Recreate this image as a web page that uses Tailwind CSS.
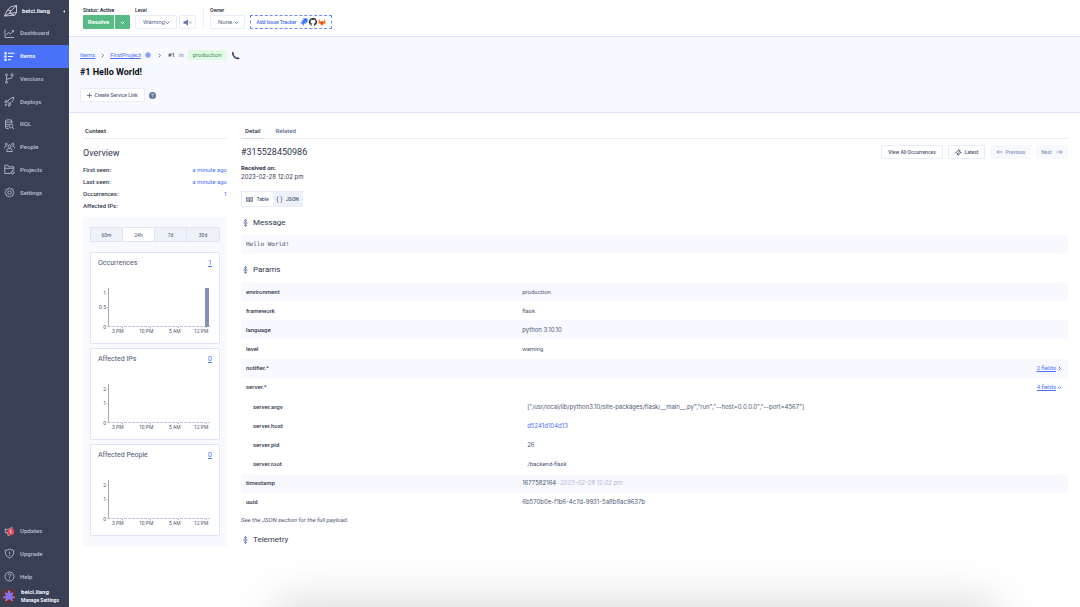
<!DOCTYPE html>
<html lang="en">
<head>
<meta charset="utf-8">
<meta name="viewport" content="width=device-width, initial-scale=1">
<title>#1 Hello World! - FirstProject</title>
<script src="https://cdn.jsdelivr.net/npm/@tailwindcss/browser@4"></script>
</head>
<body class="flex min-h-screen bg-white font-[Roboto,'Noto_Sans',sans-serif] text-[6px] leading-[8px] text-[#4b5675]">
<svg class="hidden" aria-hidden="true">
  <symbol id="chev" viewBox="0 0 10 10"><path d="M1.500 3.500 5 7 8.500 3.500" fill="none" stroke="currentColor" stroke-width="1.900"/></symbol>
  <symbol id="updown" viewBox="0 0 10 16"><path d="M5 1v5.500M5 9.500V15M2 4 5 1l3 3M2 12l3 3 3-3M1 6.500h8M1 9.500h8" fill="none" stroke="currentColor" stroke-width="1.500"/></symbol>
  <symbol id="arrow" viewBox="0 0 16 12"><path d="M1 6h13M9.500 1.500 14 6l-4.500 4.500" fill="none" stroke="currentColor" stroke-width="1.800"/></symbol>
</svg>

<aside class="flex w-[69px] shrink-0 flex-col bg-[#393f55] font-medium text-[#b9c0d4]">
  <a href="#" class="flex h-[22px] items-center pl-1 pr-1 text-[#eef0f7]">
    <svg class="h-3 w-[14px]" viewBox="0 0 28 24" fill="none" stroke="currentColor" stroke-width="1.500" stroke-linejoin="round"><path d="M1 22 7 10 14 3.500 25 1v14l-4 5.500L1 22zM7 10l7 1.500L25 1M14 11.500 11 16.500 1 22M11 16.500 25 15M11 16.500l10 4"/></svg>
    <span class="ml-1 grow font-bold">beici.liang</span>
    <svg class="h-[3px] w-[2px]" viewBox="0 0 2 3"><path d="M2 0v3L0 1.500z" fill="#d8dce8"/></svg>
  </a>
  <nav class="grid h-[182px] auto-rows-fr">
    <a href="#" class="flex items-center gap-[5px] pl-1"><svg class="h-[11px] w-[11px]" viewBox="0 0 22 22" fill="none" stroke="currentColor" stroke-width="1.700"><path d="M2 3v16h18M4.500 14l4.500-5 4 3 6-7M15.500 5H19v3.500"/></svg>Dashboard</a>
    <a href="#" class="flex items-center gap-[5px] bg-[#4a72f8] pl-1 text-white"><svg class="h-[11px] w-[11px]" viewBox="0 0 22 22" fill="none" stroke="currentColor" stroke-width="2.200"><path d="M8 4.500h13M8 11h10M8 17.500h6"/><circle cx="3" cy="4.500" r="1.400"/><circle cx="3" cy="11" r="1.400"/><circle cx="3" cy="17.500" r="1.400"/></svg>Items</a>
    <a href="#" class="flex items-center gap-[5px] pl-1"><svg class="h-[11px] w-[11px]" viewBox="0 0 22 22" fill="none" stroke="currentColor" stroke-width="1.700"><circle cx="5" cy="3.500" r="2"/><circle cx="5" cy="18.500" r="2"/><circle cx="16" cy="3.500" r="2"/><path d="M5 5.500v11M16 5.500V8q0 2-2 2.500l-7 1.500q-2 .5-2 2.500"/></svg>Versions</a>
    <a href="#" class="flex items-center gap-[5px] pl-1"><svg class="h-[11px] w-[11px]" viewBox="0 0 22 22" fill="none" stroke="currentColor" stroke-width="1.700" stroke-linejoin="round"><path d="M7 11.500Q11 3 19.500 2.500 19.500 11 10.500 15zM7.500 9.500 3.500 9 1.500 13l5-1M12.500 14.500l.5 4-4 2 1-5.500M5 15l-3 4.500L6.500 17"/></svg>Deploys</a>
    <a href="#" class="flex items-center gap-[5px] pl-1"><svg class="h-[11px] w-[11px]" viewBox="0 0 22 22" fill="none" stroke="currentColor" stroke-width="1.700"><ellipse cx="9.500" cy="4" rx="6.500" ry="2.500"/><path d="M3 4v13q0 2.500 6.500 2.500M16 4v5M3 8.500q1 2.500 6.500 2.500M3 13q.5 2 5 2.500"/><circle cx="14" cy="14" r="4"/><path d="m17 17 3.500 3.500"/></svg>RQL</a>
    <a href="#" class="flex items-center gap-[5px] pl-1"><svg class="h-[11px] w-[11px]" viewBox="0 0 22 22" fill="none" stroke="currentColor" stroke-width="1.700"><circle cx="11" cy="8.500" r="2.800"/><circle cx="4.500" cy="4.500" r="2"/><circle cx="17.500" cy="4.500" r="2"/><path d="M5.500 19v-2q0-3.500 3.500-3.500h4q3.500 0 3.500 3.500v2zM1 13V11q0-2.500 3-2.500h1M21 13V11q0-2.500-3-2.500h-1"/></svg>People</a>
    <a href="#" class="flex items-center gap-[5px] pl-1"><svg class="h-[11px] w-[11px]" viewBox="0 0 22 22" fill="none" stroke="currentColor" stroke-width="1.700"><path d="M13 19H1.500V2.500H8l2 3h9.500v7M1.500 8.500h18"/><circle cx="17" cy="17" r="2.500"/><path d="M17 12.800v1.700M17 19.500v1.700M12.800 17h1.700M19.500 17h1.700"/></svg>Projects</a>
    <a href="#" class="flex items-center gap-[5px] pl-1"><svg class="h-[11px] w-[11px]" viewBox="0 0 22 22" fill="none" stroke="currentColor" stroke-width="1.700" stroke-linejoin="round"><path d="m11 2 3 2 3.500.5.5 3.500 2 3-2 3-.5 3.500L14 18l-3 2-3-2-3.500-.5L4 14l-2-3 2-3 .5-3.500L8 4z"/><circle cx="11" cy="11" r="3.500"/></svg>Settings</a>
  </nav>
  <nav class="mt-auto grid h-[68px] auto-rows-fr">
    <a href="#" class="flex items-center gap-[5px] pl-1"><svg class="h-[11px] w-[11px]" viewBox="0 0 22 22"><path d="M2 6l5 1 9-4v11l-8-1-5 1zM6 13l2 6h3" fill="none" stroke="currentColor" stroke-width="1.700"/><circle cx="13.500" cy="11.500" r="7" fill="#dc4a57"/><path d="m11.500 9.500 2.200-1.700V15.500" fill="none" stroke="#fff" stroke-width="1.500"/></svg>Updates</a>
    <a href="#" class="flex items-center gap-[5px] pl-1"><svg class="h-[11px] w-[11px]" viewBox="0 0 22 22" fill="none" stroke="currentColor" stroke-width="1.700"><path d="M11 2q3.500 2.500 8.500 2.500Q20.500 16 11 20 1.500 16 2.500 4.500 7.500 4.500 11 2zM11 7v5M11 13.500v2"/></svg>Upgrade</a>
    <a href="#" class="flex items-center gap-[5px] pl-1"><svg class="h-[11px] w-[11px]" viewBox="0 0 22 22" fill="none" stroke="currentColor" stroke-width="1.700"><circle cx="11" cy="11" r="9"/><path d="M8 9q0-3 3-3t3 2.500q0 1.500-3 3v2M11 15v2"/></svg>Help</a>
  </nav>
  <a href="#" class="flex h-[19px] items-center gap-[5px] pl-[2px] pb-[3px] leading-[8px] text-[#f1f3f9]">
    <svg class="h-[14px] w-[14px]" viewBox="0 0 28 28"><circle cx="14" cy="14" r="14" fill="#6d2f22"/><path d="M12 3h4l1 6 5-3v5l-3 3 7 1v3l-6 1 2 5h-4l-2-3h-4l-2 3H6l2-5-6-1v-3l7-1-3-3V6l5 3z" fill="#8374f5"/></svg>
    <span class="text-[6px] font-bold">beici.liang<br><span class="text-[5px] whitespace-nowrap">Manage Settings</span></span>
  </a>
</aside>

<div class="flex min-w-0 grow flex-col">
  <header class="flex h-[37px] items-start border-b border-[#dde3fa] pl-[14px] pt-[7px] text-[5px] leading-[6px] text-[#23283a]">
    <div>
      <div class="font-medium">Status: <b>Active</b></div>
      <div class="mt-[2px] flex h-[14px] gap-px text-white">
        <button class="w-[31px] rounded-l-[1px] bg-[#56bb85] text-[6px] font-bold">Resolve</button>
        <button aria-label="More resolve options" class="flex w-[15px] items-center justify-center rounded-r-[1px] bg-[#56bb85]"><svg class="size-[5px]"><use href="#chev"/></svg></button>
      </div>
    </div>
    <div class="ml-[5px]">
      <label for="level" class="block font-medium">Level</label>
      <div class="mt-[2px] flex gap-[2px]">
        <div class="relative text-[#5b6788]">
          <select id="level" class="h-[14px] w-[42px] appearance-none rounded-[1px] border border-[#e9edf9] bg-white pl-[7px] text-[6px] leading-[8px]"><option>Warning</option></select>
          <svg class="pointer-events-none absolute right-[7px] top-[5px] size-[5px]"><use href="#chev"/></svg>
        </div>
        <button aria-label="Mute" class="flex h-[14px] w-[17px] items-center justify-center rounded-[1px] border border-[#e9edf9] text-[#6677a3]"><svg class="size-[9px]" viewBox="0 0 18 18"><path d="M1 6.500h4L10 2.500v13L5 11.500H1z" fill="currentColor"/><path d="m12.500 7 4 4m0-4-4 4" stroke="currentColor" stroke-width="1.300"/></svg></button>
      </div>
    </div>
    <div class="ml-[7px] h-[21px] border-l border-[#e9edf9]"></div>
    <div class="ml-[6px]">
      <label for="owner" class="block font-medium">Owner</label>
      <div class="relative mt-[2px] text-[#5b6788]">
        <select id="owner" class="h-[14px] w-[35px] appearance-none rounded-[1px] border border-[#e9edf9] bg-white pl-[7px] text-[6px] leading-[8px]"><option>None</option></select>
        <svg class="pointer-events-none absolute right-[6px] top-[5px] size-[5px]"><use href="#chev"/></svg>
      </div>
    </div>
    <button class="ml-[5px] mt-2 flex h-[14px] w-[82px] items-center justify-center gap-px rounded-[1px] border border-dashed border-[#6b8bfa] text-[#3f66ee]">
      <span class="mr-[2px] font-medium">Add Issue Tracker</span>
      <svg class="size-2" viewBox="0 0 16 16" fill="#2f6cf5"><path d="M6 1h9v9q-3.500 0-3.500-3.500H10V4.500Q6 4.500 6 1z"/><path d="M3.500 4.500H11V12q-3 0-3-3H6.500V7.500q-3 0-3-3z"/><path d="M1 8h7v7q-3 0-3-3H4v-1Q1 11 1 8z" opacity=".85"/></svg>
      <svg class="size-2" viewBox="0 0 16 16" fill="#1f2430"><path d="M8 0a8 8 0 0 0-2.500 15.600c.4 0 .5-.2.5-.4v-1.500c-2.200.5-2.700-1-2.700-1-.4-.9-.9-1.200-.9-1.200-.7-.5.100-.5.100-.5.800.1 1.200.8 1.200.8.700 1.300 1.900.9 2.400.7 0-.5.300-.9.500-1.100-1.800-.2-3.600-.9-3.600-4 0-.9.300-1.600.800-2.100 0-.2-.4-1 .1-2.100 0 0 .7-.2 2.200.8a7.500 7.500 0 0 1 4 0c1.500-1 2.200-.8 2.200-.8.400 1.100.2 1.900.1 2.100.5.600.8 1.300.8 2.100 0 3.100-1.900 3.700-3.700 4 .3.200.6.700.6 1.500v2.200c0 .2.100.5.600.4A8 8 0 0 0 8 0z"/></svg>
      <svg class="size-2" viewBox="0 0 16 16"><path d="m8 15 7.500-5.500L13.500 2l-2.500 5H5L2.500 2 .5 9.500z" fill="#fc7a2a"/><path d="m8 15 3-8H5z" fill="#e0482b"/></svg>
    </button>
  </header>

  <section class="h-[76px] border-b border-[#dde3fa] bg-[#f7f9fe] pl-[11px] pt-[13px]">
    <div class="flex h-[10px] items-center text-[#4a72f8]">
      <a href="#" class="underline">Items</a>
      <svg class="mx-[5px] size-[5px] -rotate-90 text-[#6d7a9c]"><use href="#chev"/></svg>
      <a href="#" class="underline">FirstProject</a>
      <svg class="ml-1 size-[6px]" viewBox="0 0 12 12"><circle cx="6" cy="6" r="5" fill="#a9bffa" stroke="#5e84f8"/><path d="M3 6h6M6 3v6" stroke="#3f68ef"/></svg>
      <svg class="mx-[6px] size-[5px] -rotate-90 text-[#6d7a9c]"><use href="#chev"/></svg>
      <span class="font-medium text-[#3a4157]">#1</span><span class="mx-1 text-[#7684a6]">in</span>
      <span class="rounded-[2px] bg-[#dffbe3] px-[5px] py-px text-[#4c8a66]">production</span>
      <svg class="ml-1 size-[9px]" viewBox="0 0 18 18"><path d="M3.500 1Q.5 4 3 9t8 7q4 1.500 6.500-1L14 12.500l-3 .5Q7 11 5.500 7.500l.500-3z" fill="#3c4052"/><path d="m3.500 1 2.500 3.500M14 12.500l3.500 2.500" stroke="#9aa0b0"/></svg>
    </div>
    <h1 class="mt-[6px] text-[9px] leading-3 font-bold text-[#0c0e16]">#1 Hello World!</h1>
    <div class="mt-[10px] flex items-center gap-1">
      <button class="flex h-[14px] w-[65px] items-center justify-center gap-[2px] rounded-[1px] border border-[#e9edf9] bg-white whitespace-nowrap text-[#55617f]"><svg class="size-[5px]" viewBox="0 0 10 10"><path d="M0 5h10M5 0v10" stroke="currentColor" stroke-width="1.600"/></svg><span class="text-[5px] font-medium">Create Service Link</span></button>
      <svg class="size-[7px]" viewBox="0 0 14 14"><circle cx="7" cy="7" r="7" fill="#63749f"/><path d="M5 5.500Q5 3.500 7 3.500t2 2q0 1-2 2v1M7 9.500v1.500" fill="none" stroke="#fff" stroke-width="1.300"/></svg>
    </div>
  </section>

  <div class="flex grow gap-[14px] pl-[14px] pr-3 pt-[12px]">
    <section class="w-[144px] shrink-0">
      <div class="h-[14px] border-b border-[#e9edf9] pl-[2px] pt-[2px] font-medium text-[#171b29]">Context</div>
      <h2 class="mt-[9px] text-[9px] leading-[10px] text-[#2f364c]">Overview</h2>
      <dl class="mt-[6px] grid grid-cols-[1fr_auto] leading-3 text-[#2f364c] [&_dt]:font-medium [&_dd]:text-[#4a72f8]">
        <dt>First seen:</dt><dd>a minute ago</dd>
        <dt>Last seen:</dt><dd>a minute ago</dd>
        <dt>Occurrences:</dt><dd class="text-right">1</dd>
        <dt>Affected IPs:</dt><dd></dd>
      </dl>
      <div class="mt-[5px] flex flex-col gap-1 bg-[#f7f9fe] px-[7px] pb-[10px] pt-[10px]">
        <div class="mb-[6px] grid h-[15px] grid-cols-4 divide-x divide-[#dfe5f3] border border-[#dfe5f3] bg-[#edf1f9] text-[5px]">
          <button>60m</button><button class="bg-white">24h</button><button>7d</button><button>30d</button>
        </div>
        <article class="rounded-[2px] border border-[#dfe5f6] bg-white pt-[5px] pb-[8px]">
          <div class="flex justify-between px-[7px] leading-[11px]"><h3 class="text-[7px]">Occurrences</h3><a href="#" class="text-[7px] text-[#4a72f8] underline">1</a></div>
          <svg class="mt-[19px] block h-[47px] w-full" viewBox="0 0 128 47" fill="#4b5675" font-size="5"><path d="M17.500 0v38" stroke="#a8a8ae"/><path d="M16 5.500h1M16 19.500h1M16 38.500h1M31.500 38v2M59.500 38v2M87.500 38v2M115.500 38v2" stroke="#b8b8be"/><path d="M17 38.500h102" stroke="#c0c5d6" stroke-dasharray="3 1"/><rect x="114" width="4" height="39" fill="#8491b8"/><text x="15" y="7" text-anchor="end">1</text><text x="15" y="21" text-anchor="end">0.5</text><text x="15" y="41" text-anchor="end">0</text><text x="21" y="45">3 PM</text><text x="48" y="45">10 PM</text><text x="78" y="45">5 AM</text><text x="103" y="45">12 PM</text></svg>
        </article>
        <article class="rounded-[2px] border border-[#dfe5f6] bg-white pt-[5px] pb-[8px]">
          <div class="flex justify-between px-[7px] leading-[11px]"><h3 class="text-[7px]">Affected IPs</h3><a href="#" class="text-[7px] text-[#4a72f8] underline">0</a></div>
          <svg class="mt-[19px] block h-[47px] w-full" viewBox="0 0 128 47" fill="#4b5675" font-size="5"><path d="M17.500 0v38" stroke="#a8a8ae"/><path d="M16 5.500h1M16 19.500h1M16 38.500h1M31.500 38v2M59.500 38v2M87.500 38v2M115.500 38v2" stroke="#b8b8be"/><path d="M17 38.500h102" stroke="#c0c5d6" stroke-dasharray="3 1"/><text x="15" y="7" text-anchor="end">2</text><text x="15" y="21" text-anchor="end">1</text><text x="15" y="41" text-anchor="end">0</text><text x="21" y="45">3 PM</text><text x="48" y="45">10 PM</text><text x="78" y="45">5 AM</text><text x="103" y="45">12 PM</text></svg>
        </article>
        <article class="rounded-[2px] border border-[#dfe5f6] bg-white pt-[5px] pb-[8px]">
          <div class="flex justify-between px-[7px] leading-[11px]"><h3 class="text-[7px]">Affected People</h3><a href="#" class="text-[7px] text-[#4a72f8] underline">0</a></div>
          <svg class="mt-[19px] block h-[47px] w-full" viewBox="0 0 128 47" fill="#4b5675" font-size="5"><path d="M17.500 0v38" stroke="#a8a8ae"/><path d="M16 5.500h1M16 19.500h1M16 38.500h1M31.500 38v2M59.500 38v2M87.500 38v2M115.500 38v2" stroke="#b8b8be"/><path d="M17 38.500h102" stroke="#c0c5d6" stroke-dasharray="3 1"/><text x="15" y="7" text-anchor="end">2</text><text x="15" y="21" text-anchor="end">1</text><text x="15" y="41" text-anchor="end">0</text><text x="21" y="45">3 PM</text><text x="48" y="45">10 PM</text><text x="78" y="45">5 AM</text><text x="103" y="45">12 PM</text></svg>
        </article>
      </div>
    </section>

    <main class="min-w-0 grow">
      <div class="flex h-[14px] gap-[7px] border-b border-[#e9edf9] font-medium">
        <button class="h-[14px] border-b border-[#d3dbf2] px-1 pb-[2px] text-[#2f364c]">Detail</button>
        <button class="h-[14px] px-1 pb-[2px] text-[#5d6a8d]">Related</button>
      </div>
      <div class="mt-[5px] flex items-center gap-[5px] text-[5px]">
        <h2 class="mr-auto text-[9px] leading-[16px] text-[#2f364c]">#315528450986</h2>
        <button class="h-[14px] w-[62px] border border-[#e9edf9] font-medium">View All Occurrences</button>
        <button class="flex h-[14px] w-[37px] items-center justify-center gap-[3px] border border-[#e9edf9] font-medium"><svg class="size-[7px]" viewBox="0 0 14 14" fill="none" stroke="currentColor" stroke-width="1.500"><path d="m7 1 2 4 4 2-4 2-2 4-2-4-4-2 4-2zM10 1.500 7.500 7 4 12.500"/></svg>Latest</button>
        <button class="flex h-[14px] w-[41px] items-center justify-center gap-[3px] rounded-[1px] bg-[#f6f8fd] font-medium text-[#8593b8]"><svg class="h-[6px] w-[7px] rotate-180"><use href="#arrow"/></svg>Previous</button>
        <button class="flex h-[14px] w-[32px] items-center justify-center gap-[4px] rounded-[1px] bg-[#f6f8fd] font-medium text-[#8593b8]">Next<svg class="h-[6px] w-[7px]"><use href="#arrow"/></svg></button>
      </div>
      <div class="mt-[4px] font-bold text-[#2f364c]">Received on:</div>
      <div class="font-[Inter,sans-serif] leading-[9px] text-[#2f364c]">2023-02-28 12:02 pm</div>
      <div class="mt-[10px] flex h-[16px] w-[62px] border border-[#e9edf9] bg-[#edf1f9] text-[5px] font-medium">
        <button class="flex w-[31px] items-center justify-center gap-[3px] bg-white"><svg class="h-[5px] w-[7px]" viewBox="0 0 14 10" fill="none" stroke="currentColor" stroke-width="1.300"><path d="M.7.700h12.600v8.600H.7zM.7 3.500h12.600M.7 6.400h12.600M7 3.500v6"/></svg>Table</button>
        <button class="flex grow items-center justify-center gap-[3px]"><svg class="size-[7px]" viewBox="0 0 14 14" fill="none" stroke="currentColor" stroke-width="1.300"><path d="M5 1Q3 1 3 3v2q0 2-1.500 2Q3 7 3 9v2q0 2 2 2M9 1q2 0 2 2v2q0 2 1.500 2Q11 7 11 9v2q0 2-2 2"/></svg>JSON</button>
      </div>
      <h3 class="mt-[10px] flex items-center gap-[5px] pl-[2px] text-[8px] leading-3 text-[#2f364c]"><svg class="h-2 w-[5px] text-[#5f6fa0]"><use href="#updown"/></svg>Message</h3>
      <pre class="mt-[6px] h-[19px] bg-[#f7f9fe] pl-[5px] font-['DejaVu_Sans_Mono',monospace] text-[6px] leading-[18px]">Hello World!</pre>
      <h3 class="mt-[10px] flex items-center gap-[5px] pl-[2px] text-[8px] leading-3 text-[#2f364c]"><svg class="h-2 w-[5px] text-[#5f6fa0]"><use href="#updown"/></svg>Params</h3>
      <table class="mt-[6px] h-[230px] w-full table-fixed text-left [&_th]:pl-[5px] [&_th]:font-medium [&_th]:text-[#2f364c]">
        <colgroup><col class="w-[34%]"><col></colgroup>
        <tbody>
          <tr class="bg-[#f7f9fe]"><th>environment</th><td>production</td></tr>
          <tr><th>framework</th><td>flask</td></tr>
          <tr class="bg-[#f7f9fe]"><th>language</th><td class="font-[Inter,sans-serif]">python 3.10.10</td></tr>
          <tr><th>level</th><td>warning</td></tr>
          <tr class="bg-[#f7f9fe]"><th>notifier.*</th><td><a href="#" class="flex items-center justify-end gap-px pr-[6px] text-[#4a72f8]"><span class="underline">2 fields</span><svg class="size-[5px] -rotate-90"><use href="#chev"/></svg></a></td></tr>
          <tr><th>server.*</th><td><a href="#" class="flex items-center justify-end gap-px pr-[6px] text-[#4a72f8]"><span class="underline">4 fields</span><svg class="size-[5px]"><use href="#chev"/></svg></a></td></tr>
          <tr><th><span class="pl-[7px]">server.argv</span></th><td class="pl-[5px] font-[Inter,sans-serif]">["/usr/local/lib/python3.10/site-packages/flask/__main__.py","run","--host=0.0.0.0","--port=4567"]</td></tr>
          <tr><th><span class="pl-[7px]">server.host</span></th><td class="pl-[5px] font-[Inter,sans-serif]"><a href="#" class="text-[#4a72f8]">d5241d104d13</a></td></tr>
          <tr><th><span class="pl-[7px]">server.pid</span></th><td class="pl-[5px] font-[Inter,sans-serif]">26</td></tr>
          <tr><th><span class="pl-[7px]">server.root</span></th><td class="pl-[5px]">/backend-flask</td></tr>
          <tr class="bg-[#f7f9fe]"><th>timestamp</th><td class="font-[Inter,sans-serif]">1677582164 <i class="ml-[2px] text-[#b0bad2]">2023-02-28 12:02 pm</i></td></tr>
          <tr><th>uuid</th><td class="font-[Inter,sans-serif]">6b570b0e-f1b6-4c7d-9931-5a8b8ac9637b</td></tr>
        </tbody>
      </table>
      <p class="mt-1 italic">See the JSON section for the full payload.</p>
      <h3 class="mt-[10px] flex items-center gap-[5px] pl-[2px] text-[8px] leading-3 text-[#2f364c]"><svg class="h-2 w-[5px] text-[#5f6fa0]"><use href="#updown"/></svg>Telemetry</h3>
    </main>
  </div>
</div>
<div class="pointer-events-none fixed top-full right-[85px] left-[275px] h-10 shadow-[0_0_50px_rgba(0,0,0,0.2)]"></div>
</body>
</html>
